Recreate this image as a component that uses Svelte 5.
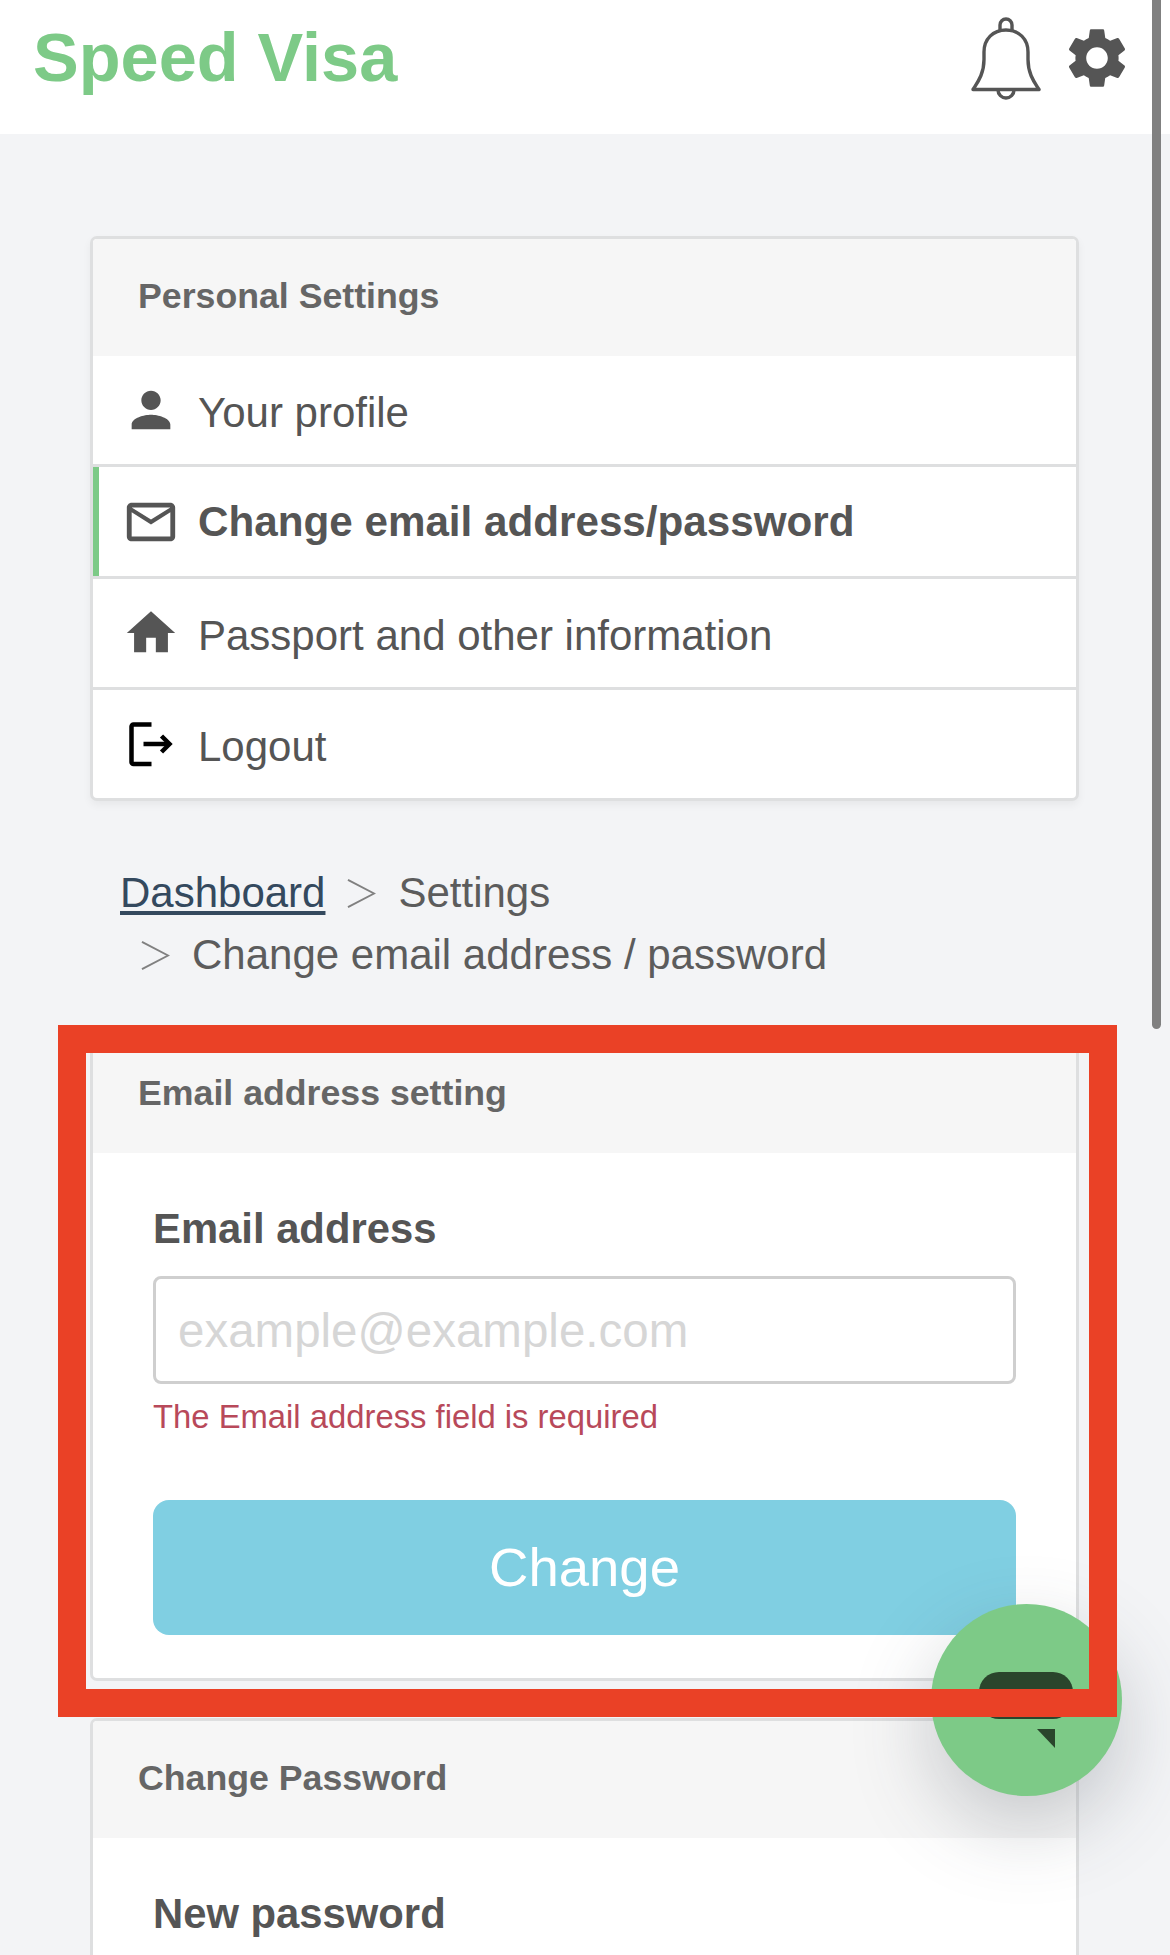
<script lang="ts">
  // Settings page for the Speed Visa mobile view
  const menu = [
    { label: "Your profile", icon: "person" },
    { label: "Change email address/password", icon: "mail", active: true },
    { label: "Passport and other information", icon: "home" },
    { label: "Logout", icon: "logout" },
  ];

  const paths: Record<string, string> = {
    person:
      "M12 12c2.21 0 4-1.79 4-4s-1.79-4-4-4-4 1.79-4 4 1.79 4 4 4zm0 2c-2.67 0-8 1.34-8 4v2h16v-2c0-2.66-5.33-4-8-4z",
    mail: "M20 4H4c-1.1 0-2 .9-2 2v12c0 1.1.9 2 2 2h16c1.1 0 2-.9 2-2V6c0-1.1-.9-2-2-2zm0 14H4V8l8 5 8-5v10zm-8-7L4 6h16l-8 5z",
    home: "M10 20v-6h4v6h5v-8h3L12 3 2 12h3v8z",
  };
</script>

<div class="page">
  <header class="topbar">
    <div class="logo">Speed Visa</div>
    <div class="top-icons">
      <svg class="bell" viewBox="0 0 70 84" fill="none" stroke="#555" stroke-width="3.4" stroke-linejoin="round">
        <path d="M29 14V8a6 6 0 0 1 12 0v6" />
        <path d="M2 72.5c4-6.500 11-15 11-30V35C13 22 22 13 35 13s22 9 22 22v7.500c0 15 7 23.500 11 30z" />
        <path d="M27 73a8 8 0 0 0 16 0" />
      </svg>
      <svg class="gear" viewBox="0 0 24 24" fill="#555">
        <path d="M19.14 12.94c.04-.3.06-.61.06-.94 0-.32-.02-.64-.07-.94l2.03-1.58c.18-.14.23-.41.12-.61l-1.92-3.32c-.12-.22-.37-.29-.59-.22l-2.39.96c-.5-.38-1.03-.7-1.62-.94l-.36-2.54c-.04-.24-.24-.41-.48-.41h-3.84c-.24 0-.43.17-.47.41l-.36 2.54c-.59.24-1.13.57-1.62.94l-2.39-.96c-.22-.08-.47 0-.59.22L2.74 8.87c-.12.21-.08.47.12.61l2.03 1.58c-.05.3-.09.63-.09.94s.02.64.07.94l-2.03 1.58c-.18.14-.23.41-.12.61l1.92 3.32c.12.22.37.29.59.22l2.39-.96c.5.38 1.03.7 1.62.94l.36 2.54c.05.24.24.41.48.41h3.84c.24 0 .44-.17.47-.41l.36-2.54c.59-.24 1.13-.56 1.62-.94l2.39.96c.22.08.47 0 .59-.22l1.92-3.32c.12-.22.07-.47-.12-.61l-2.01-1.58zM12 15.600c-1.98 0-3.600-1.620-3.600-3.600s1.620-3.600 3.600-3.600 3.600 1.620 3.600 3.600-1.620 3.600-3.600 3.600z" />
      </svg>
    </div>
  </header>

  <main class="content">
    <section class="card menu-card">
      <div class="card-head">Personal Settings</div>
      {#each menu as item}
        <div class="menu-item" class:active={item.active}>
          {#if item.icon === "logout"}
            <svg class="menu-icon" viewBox="0 0 58 58" fill="none" stroke="#000" stroke-width="4.500">
              <path d="M29.500 9.500H11.500a2 2 0 0 0-2 2V47a2 2 0 0 0 2 2h18" />
              <path d="M21.500 29H46" />
              <path d="M39.500 21 47.500 29l-8 8" />
            </svg>
          {:else}
            <svg class="menu-icon" viewBox="0 0 24 24" fill="#555"><path d={paths[item.icon]} /></svg>
          {/if}
          <span>{item.label}</span>
        </div>
      {/each}
    </section>

    <nav class="crumbs">
      <div class="crumb-row">
        <a href="#dashboard">Dashboard</a>
        <svg class="chev" viewBox="0 0 30 30" fill="none" stroke="#808080" stroke-width="2"><path d="M1 1l27 14L1 29" /></svg>
        <span>Settings</span>
      </div>
      <div class="crumb-row second">
        <svg class="chev" viewBox="0 0 30 30" fill="none" stroke="#808080" stroke-width="2"><path d="M1 1l27 14L1 29" /></svg>
        <span>Change email address / password</span>
      </div>
    </nav>

    <section class="card email-card">
      <div class="card-head">Email address setting</div>
      <div class="card-body">
        <div class="field-label">Email address</div>
        <input class="field" type="text" placeholder="example@example.com" />
        <div class="field-error">The Email address field is required</div>
        <button class="submit" type="button">Change</button>
      </div>
    </section>

    <section class="card password-card">
      <div class="card-head">Change Password</div>
      <div class="card-body">
        <div class="field-label">New password</div>
      </div>
    </section>
  </main>

  <div class="scrollbar"></div>

  <div class="chat">
    <span class="bubble"></span>
    <span class="tail"></span>
  </div>

  <div class="highlight"></div>
</div>

<style>
  :global(body) {
    margin: 0;
    background: #f3f4f6;
  }
  .page {
    position: relative;
    width: 1170px;
    height: 1955px;
    overflow: hidden;
    background: #f3f4f6;
    color: #555;
    font-family: "Liberation Sans", Arial, sans-serif;
  }

  .topbar {
    height: 134px;
    background: #fff;
    display: flex;
    justify-content: space-between;
    padding: 0 43px 0 33px;
    box-sizing: border-box;
  }
  .logo {
    font-size: 68.5px;
    font-weight: 700;
    line-height: 116px;
    color: #7dca87;
  }
  .top-icons {
    display: flex;
    align-items: flex-start;
    gap: 26px;
  }
  .bell {
    width: 70px;
    height: 84px;
    margin-top: 17px;
  }
  .gear {
    width: 72px;
    height: 72px;
    margin-top: 22px;
    margin-left: -6px;
    margin-right: -6px;
  }

  .content {
    padding: 102px 0 0 90px;
    width: 989px;
  }
  .card {
    border: 3px solid #dedfe0;
    border-radius: 7px;
    background: #fff;
    overflow: hidden;
  }
  .card-head {
    height: 117px;
    padding-left: 45px;
    background: #f6f6f6;
    color: #666;
    font-size: 35.7px;
    font-weight: 700;
    line-height: 114px;
  }

  .menu-card {
    box-shadow: 0 4px 8px rgba(0, 0, 0, 0.05);
  }
  .menu-item {
    height: 108px;
    display: flex;
    align-items: center;
    gap: 18px;
    padding-left: 29px;
    border-top: 3px solid #dedfe0;
    font-size: 42px;
    color: #555;
    position: relative;
  }
  .menu-item span {
    padding-top: 5px;
  }
  .card-head + .menu-item {
    border-top: 0;
  }
  .menu-item.active {
    font-weight: 700;
    height: 109px;
    font-size: 42.2px;
  }
  .menu-item.active span {
    padding-top: 0;
  }
  .menu-item.active::before {
    content: "";
    position: absolute;
    left: 0;
    top: 0;
    bottom: 0;
    width: 6px;
    background: #7dca87;
  }
  .menu-icon {
    width: 58px;
    height: 58px;
    flex: none;
  }

  .crumbs {
    padding: 61px 0 0 30px;
    font-size: 42px;
    color: #5c5c5c;
    box-sizing: border-box;
    height: 233px;
  }
  .crumb-row {
    display: flex;
    align-items: center;
    height: 62px;
    gap: 22px;
  }
  .crumb-row.second {
    padding-left: 21px;
  }
  .crumb-row a {
    color: #34495e;
    text-decoration: underline;
    text-underline-offset: 4px;
  }
  .chev {
    width: 29px;
    height: 29px;
  }

  .card-body {
    padding: 0 60px;
  }
  .email-card .card-head {
    height: 116px;
    line-height: 112px;
  }
  .email-card .card-body {
    height: 525px;
    padding-top: 48px;
    box-sizing: border-box;
  }
  .field-label {
    font-size: 41.8px;
    font-weight: 700;
    line-height: 56px;
    color: #555;
  }
  .field {
    display: block;
    width: 100%;
    height: 108px;
    box-sizing: border-box;
    margin-top: 19px;
    padding: 0 22px;
    border: 3px solid #cfcfcf;
    border-radius: 8px;
    font-family: inherit;
    font-size: 47.5px;
    background: #fff;
  }
  .field::placeholder {
    color: #d6d6d6;
    opacity: 1;
  }
  .field-error {
    margin-top: 14px;
    font-size: 32.8px;
    line-height: 38px;
    color: #b8495a;
  }
  .submit {
    display: block;
    width: 100%;
    height: 135px;
    margin-top: 64px;
    border: 0;
    border-radius: 16px;
    background: #80cfe2;
    color: #fff;
    font-family: inherit;
    font-size: 54.5px;
  }

  .password-card {
    margin-top: 37px;
    height: 300px;
  }
  .password-card .card-head {
    line-height: 114px;
  }
  .password-card .card-body {
    padding-top: 48px;
  }

  .scrollbar {
    position: absolute;
    top: -10px;
    left: 1152px;
    width: 9px;
    height: 1039px;
    border-radius: 5px;
    background: #808080;
  }

  .chat {
    position: absolute;
    left: 931px;
    top: 1604px;
    width: 191px;
    height: 192px;
    border-radius: 50%;
    background: #7dca87;
    box-shadow: 0 30px 80px rgba(60, 70, 80, 0.26);
  }
  .bubble {
    position: absolute;
    left: 48px;
    top: 68px;
    width: 94px;
    height: 47px;
    border-radius: 20px;
    background: #2a452c;
  }
  .tail {
    position: absolute;
    left: 106px;
    top: 125px;
    width: 18px;
    height: 19px;
    background: #2a452c;
    clip-path: polygon(0 0, 100% 0, 100% 100%);
  }

  .highlight {
    position: absolute;
    left: 58px;
    top: 1025px;
    width: 1059px;
    height: 692px;
    box-sizing: border-box;
    border: solid #ea4126;
    border-width: 28px;
  }
</style>
